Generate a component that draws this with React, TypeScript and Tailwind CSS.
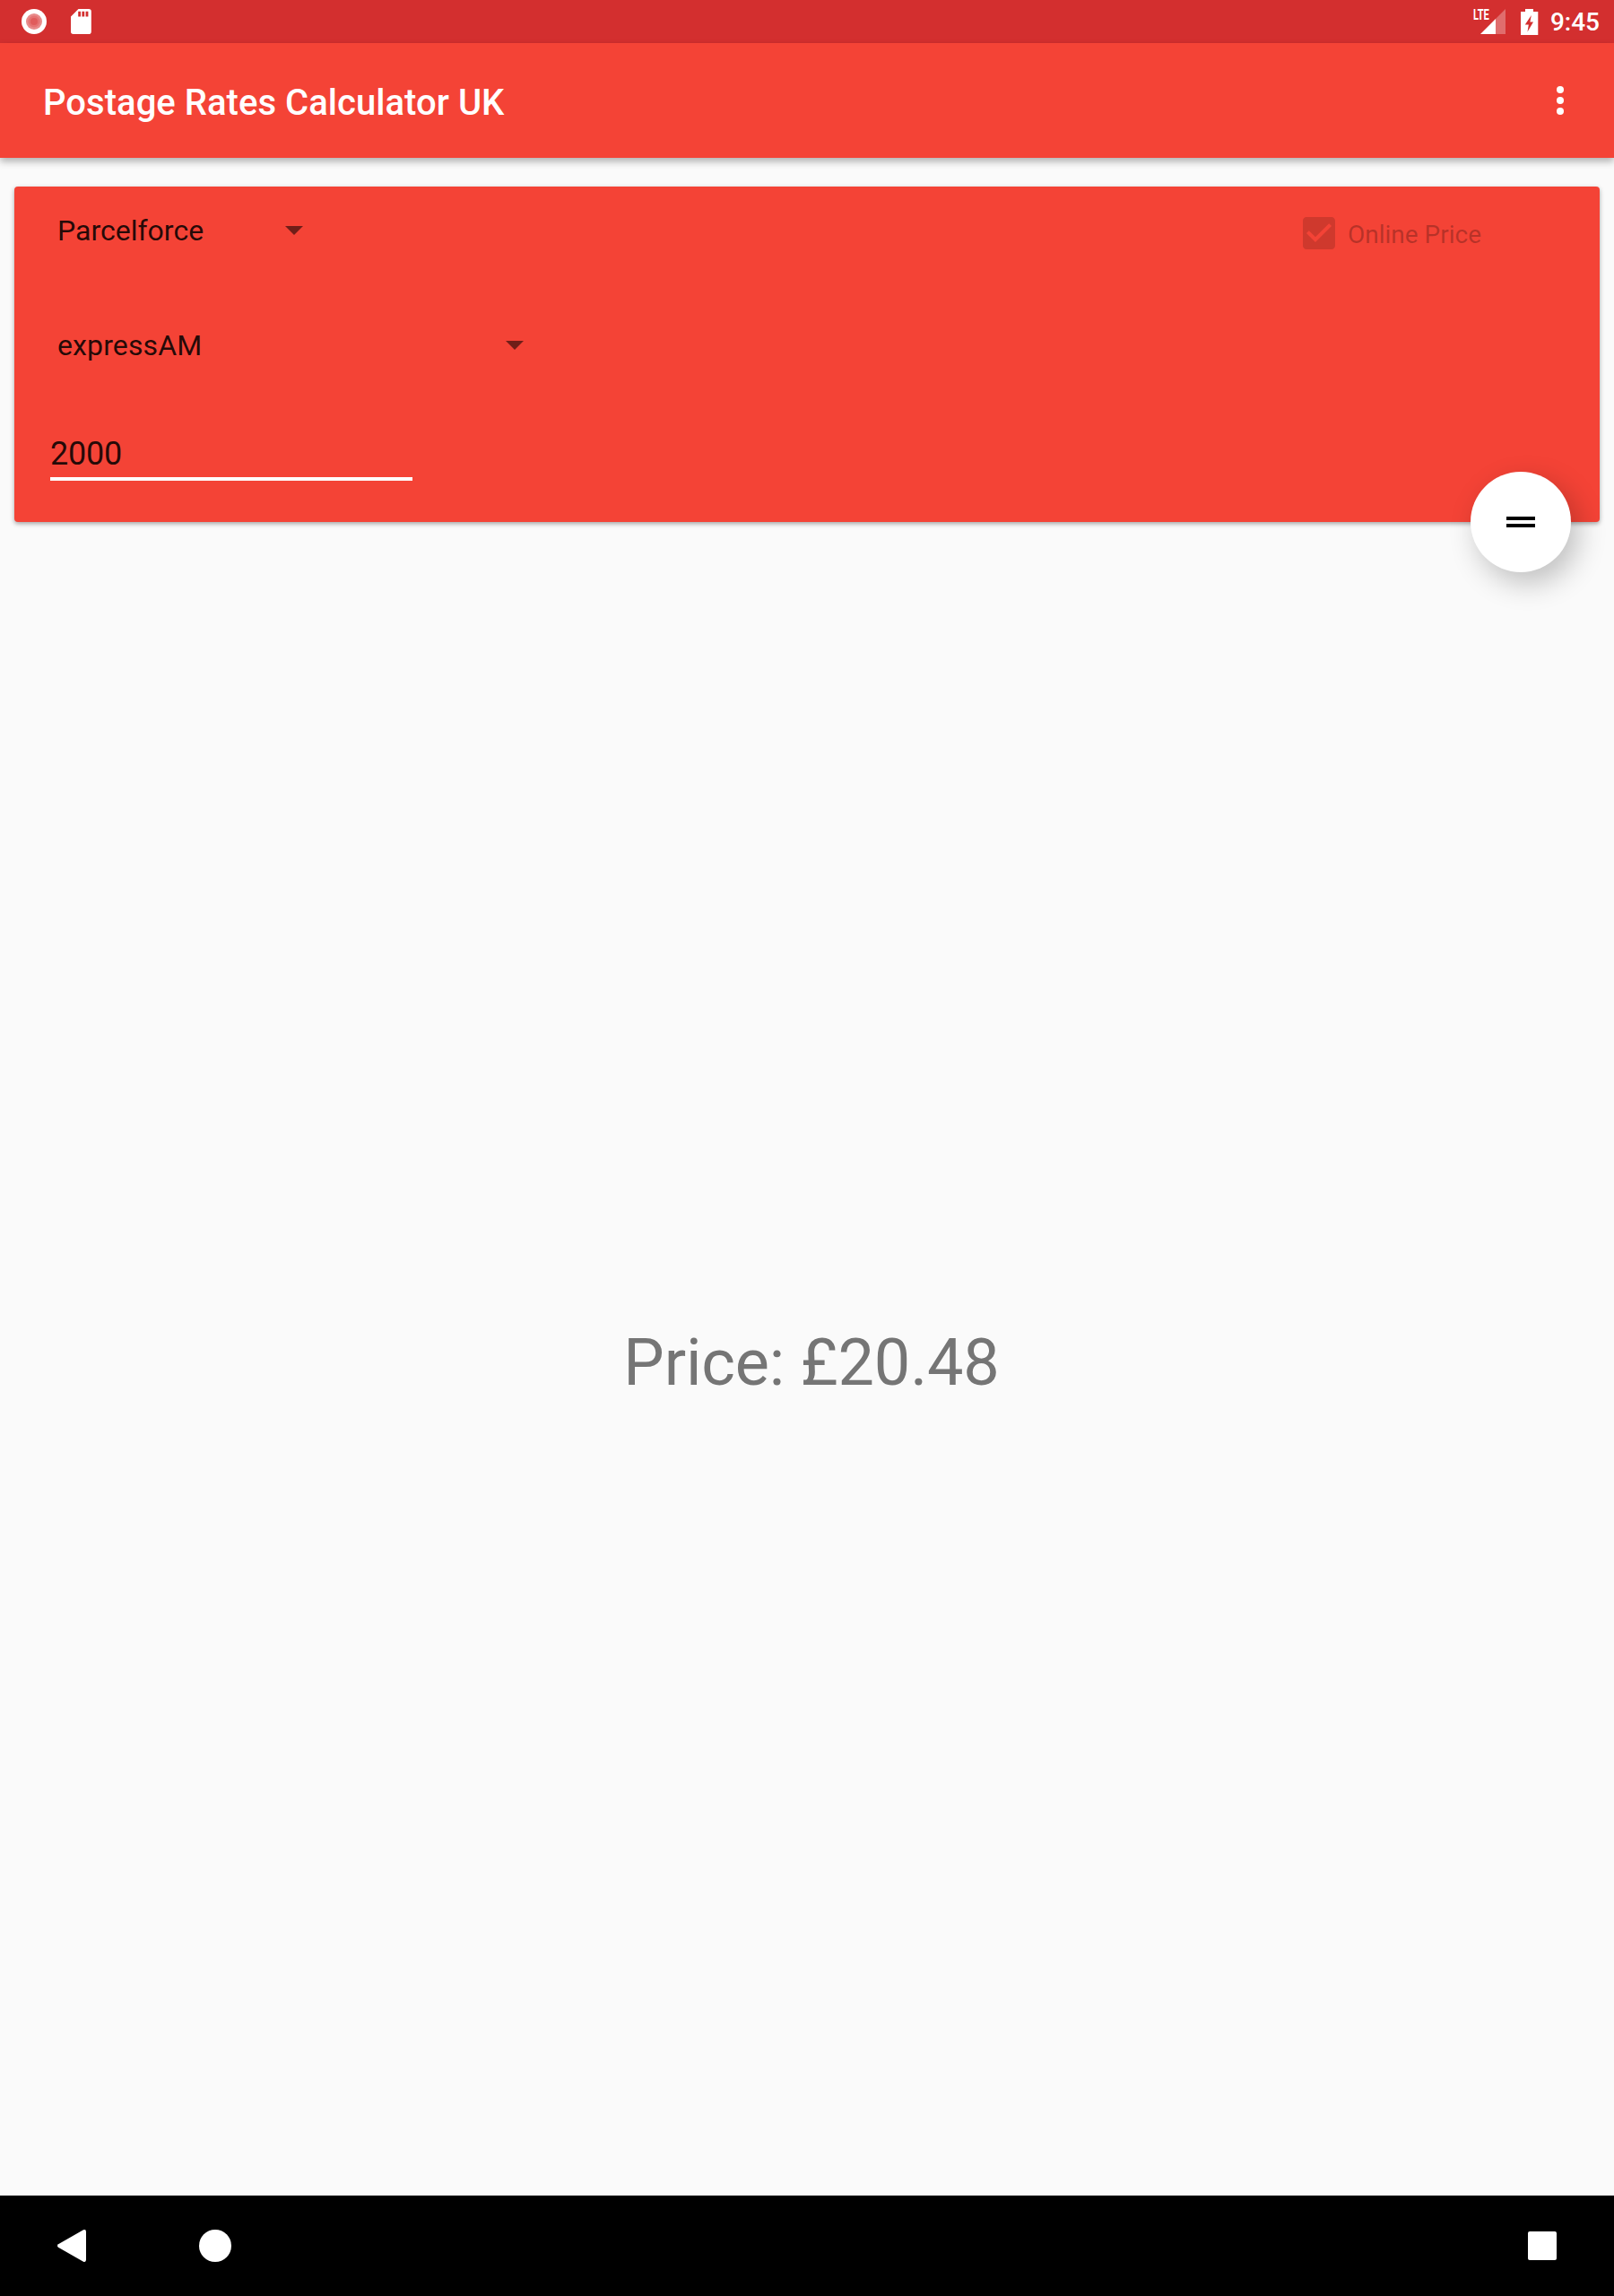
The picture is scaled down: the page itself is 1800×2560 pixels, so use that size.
import type { ReactNode } from "react";

interface SpinnerProps {
  value: string;
  className?: string;
}

function Spinner({ value, className }: SpinnerProps) {
  return (
    <button
      type="button"
      className={`flex h-12 items-center justify-between pl-4 pr-[14px] text-[32px] leading-[48px] text-black/87 ${className}`}
    >
      <span>{value}</span>
      <svg width="20" height="10" viewBox="0 0 20 10" className="fill-black/54">
        <path d="M0 0h20L10 10z" />
      </svg>
    </button>
  );
}

function StatusBar() {
  return (
    <div className="flex h-12 items-center justify-between bg-[#d32f2f] pl-6 pr-4 text-white">
      <div className="flex items-center gap-[27px]">
        <svg width="28" height="28" viewBox="0 0 28 28">
          <circle cx="14" cy="14" r="14" fill="#fff" />
          <circle cx="14" cy="14" r="9" fill="#e88b8b" />
          <circle cx="14" cy="14" r="6.5" fill="#e57373" />
          <circle cx="14" cy="14" r="4" fill="#e05c5c" />
        </svg>
        <svg width="23" height="28" viewBox="0 0 23 28">
          <path
            fill="#fff"
            fillRule="evenodd"
            d="M8.5 0H20a2.8 2.8 0 0 1 2.8 2.8v22.4A2.8 2.8 0 0 1 20 28H2.8A2.8 2.8 0 0 1 0 25.2V8.5zM8.2 2.8v5.6H11V2.8zM12.4 2.8v5.6h2.8V2.8zM16.6 2.8v5.6h2.8V2.8z"
          />
        </svg>
      </div>
      <div className="flex items-center">
        <div className="relative mr-[17px] h-7 w-9">
          <span className="absolute left-0 top-0 origin-left scale-x-[0.65] text-[17px] font-bold leading-[13px]">
            LTE
          </span>
          <svg width="28" height="28" viewBox="0 0 28 28" className="absolute right-0 top-0">
            <path fill="#fff" fillOpacity=".3" d="M17 11 28 0v28H17z" />
            <path fill="#fff" d="M0 28 17 11v17z" />
          </svg>
        </div>
        <svg width="20" height="29" viewBox="0 0 20 29" className="mr-[13px]">
          <path
            fill="#fff"
            fillRule="evenodd"
            d="M5 0h9v3h5.3v26H0V3h5zM11.8 7 4.8 17.5h4L7.5 25.5l6.5-11H10.4z"
          />
        </svg>
        <span className="mt-[2px] text-[28px] font-medium leading-8">9:45</span>
      </div>
    </div>
  );
}

function AppBar({ title }: { title: string }) {
  return (
    <header className="relative z-10 flex h-32 items-center justify-between bg-[#f44336] pl-12 pr-14 shadow-[0_4px_8px_rgba(0,0,0,0.3)]">
      <h1 className="pt-[6px] text-[40px] font-medium leading-[48px] tracking-[0.04px] text-white">{title}</h1>
      <button type="button" aria-label="More options">
        <svg width="8" height="32" viewBox="0 0 8 32" fill="#fff">
          <circle cx="4" cy="4" r="4" />
          <circle cx="4" cy="16" r="4" />
          <circle cx="4" cy="28" r="4" />
        </svg>
      </button>
    </header>
  );
}

function OnlinePrice() {
  return (
    <div className="mr-[132px] mt-7 flex h-12 items-center gap-2 text-[28px] leading-8">
      <svg width="48" height="48" viewBox="0 0 24 24" className="fill-black/15">
        <path d="M19 3H5c-1.11 0-2 .9-2 2v14c0 1.1.89 2 2 2h14c1.11 0 2-.9 2-2V5c0-1.1-.89-2-2-2zm-9 14l-5-5 1.41-1.41L10 14.17l7.59-7.59L19 8l-9 9z" />
      </svg>
      <span className="pt-[3px] text-black/25">Online Price</span>
    </div>
  );
}

function NavButton({ label, className, children }: { label: string; className?: string; children: ReactNode }) {
  return (
    <button type="button" aria-label={label} className={className}>
      <svg width="36" height="36" viewBox="0 0 36 36" fill="#fff">
        {children}
      </svg>
    </button>
  );
}

export default function App() {
  return (
    <div className="flex h-[2560px] w-[1800px] flex-col bg-[#fafafa] font-['Roboto',sans-serif]">
      <StatusBar />
      <AppBar title="Postage Rates Calculator UK" />

      <section className="relative mx-4 mt-8 h-[374px] rounded-[4px] bg-[#f44336] shadow-[0_2px_5px_rgba(0,0,0,0.35)]">
        <div className="flex items-start justify-between">
          <Spinner value="Parcelforce" className="ml-8 mt-[25px] w-[304px]" />
          <OnlinePrice />
        </div>
        <Spinner value="expressAM" className="ml-8 mt-[77px] w-[550px] tracking-[0.12px]" />
        <div className="ml-10 mt-[71px] h-[56px] w-[404px] border-b-4 border-white pt-[2px] text-[36px] leading-[48px] tracking-[-0.2px] text-black/87">
          2000
        </div>

        <button
          type="button"
          aria-label="Calculate"
          className="absolute -bottom-14 right-8 flex h-28 w-28 items-center justify-center rounded-full bg-white shadow-[8px_12px_32px_rgba(0,0,0,0.24)]"
        >
          <svg width="32" height="12" viewBox="0 0 32 12" fill="#000">
            <path d="M0 0h32v4H0zM0 8h32v4H0z" />
          </svg>
        </button>
      </section>

      <main className="flex flex-1 items-center justify-center pl-[10px] pt-[10px]">
        <p className="text-[72px] leading-[84px] tracking-[-0.15px] text-[#757575]">Price: £20.48</p>
      </main>

      <nav className="flex h-28 items-center bg-black px-[62px]">
        <NavButton label="Back">
          <path d="M31 .3Q34 -.8 34 2.5v31Q34 36.8 31 35.7L3 19.8Q1 18 3 16.2z" />
        </NavButton>
        <NavButton label="Home" className="ml-[124px]">
          <circle cx="18" cy="18" r="18" />
        </NavButton>
        <NavButton label="Recents" className="ml-auto">
          <rect x="2" y="2" width="32" height="32" rx="2" />
        </NavButton>
      </nav>
    </div>
  );
}
